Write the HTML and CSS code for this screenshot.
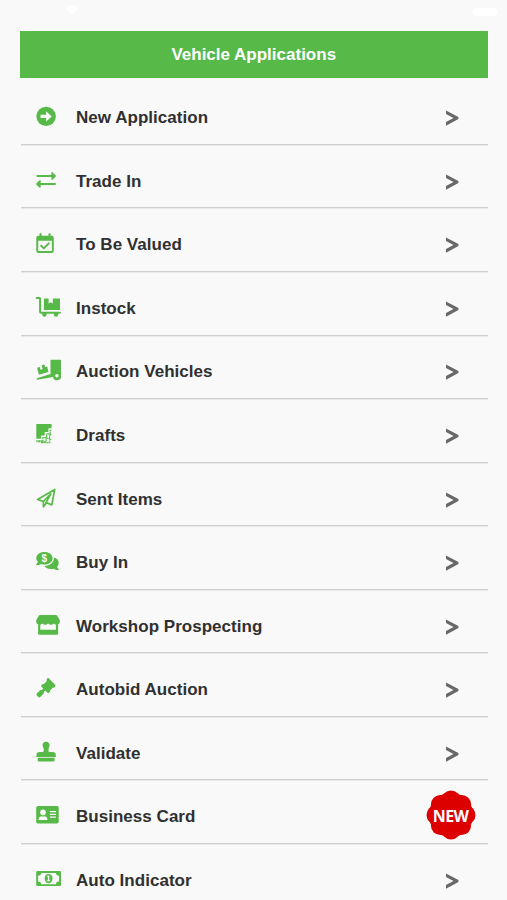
FILE: index.html
```
<!DOCTYPE html>
<html lang="en">
<head>
<meta charset="utf-8">
<meta name="viewport" content="width=device-width">
<title>Vehicle Applications</title>
<link rel="stylesheet" href="styles.css">
</head>
<body>
<svg class="symbols" aria-hidden="true">
  <symbol id="chevron" viewBox="0 0 16 20"><path d="M2 2.500 14.400 8.900v2.200L2 17.700v-3.600L9.500 10 2 6z"/></symbol>
</svg>
<header class="status" aria-hidden="true">
  <svg class="wifi" viewBox="0 0 14 10"><path d="M0 3Q7-3 14 3L7 10z"/></svg>
  <svg class="battery" viewBox="0 0 24 10"><rect y="1" width="24" height="8" rx="4"/></svg>
</header>
<main class="menu">
  <h1 class="title">Vehicle Applications</h1>
  <ul class="list">
    <li class="row">
      <svg class="icon" viewBox="0 0 28 24"><circle cx="12.1" cy="10.4" r="9.7"/><path class="paper" d="M6.600 8.700h5.500V5.300l5.700 5.100-5.700 5.100v-3.400H6.600z"/></svg>
      <span class="label">New Application</span><svg class="chevron"><use href="#chevron"/></svg>
    </li>
    <li class="row">
      <svg class="icon" viewBox="0 0 28 24"><path class="line" d="M3.400 5.900h16M21 14H5"/><path d="M17.400 2.400q.5-.8 1.400 0l3 3q.5.500 0 1l-3 3q-.9.800-1.400 0zM6.700 10.400q-.5-.8-1.400 0l-3 3q-.5.500 0 1l3 3q.9.800 1.400 0z"/></svg>
      <span class="label">Trade In</span><svg class="chevron"><use href="#chevron"/></svg>
    </li>
    <li class="row">
      <svg class="icon" viewBox="0 0 28 24"><path fill-rule="evenodd" d="M4.300 2.800h1.200V.7q0-.5.5-.5h1.100q.5 0 .5.500v2.100h6.900V.7q0-.5.5-.5h1.100q.5 0 .5.500v2.100h1.200q2 0 2 2v13.200q0 2-2 2H4.300q-2 0-2-2V4.800q0-2 2-2zm-.1 4.900v9.900q0 .5.500.500h12.700q.5 0 .5-.5V7.700z"/><path class="line" d="m7.200 12.800 2.600 2.600 5-5"/></svg>
      <span class="label">To Be Valued</span><svg class="chevron"><use href="#chevron"/></svg>
    </li>
    <li class="row">
      <svg class="icon" viewBox="0 0 28 24"><path class="line" d="M2.700 1.100h2.900q.5 0 .5.500v13.500q0 .6.600.6h19.100"/><path d="M10 1.400h4.600v5.100l2.100-1.200 2.100 1.200V1.400H26V13H9.800z"/><circle cx="10.400" cy="17.600" r="2.200"/><circle cx="22" cy="17.600" r="2.200"/></svg>
      <span class="label">Instock</span><svg class="chevron"><use href="#chevron"/></svg>
    </li>
    <li class="row">
      <svg class="icon" viewBox="0 0 28 24"><path fill-rule="evenodd" d="M16.500.4q0-.6.600-.6h9.200q.7 0 .7.700v15a4 4 0 0 1-7.900 1.400L3.500 19.800q-.7 0-.8-.8-.1-.7.800-1l13-3.900zm6.400 13.500a1.700 1.700 0 1 0 0 3.500 1.700 1.700 0 0 0 0-3.500z"/><path d="m3 7.700 2.700-.8 1 3 1.900-1.100-1-3.500 2.700-.9.900 2.700 2-.4 1.300 5.200-9.600 2.800z"/></svg>
      <span class="label">Auction Vehicles</span><svg class="chevron"><use href="#chevron"/></svg>
    </li>
    <li class="row">
      <svg class="icon" viewBox="0 0 28 24"><path d="M2.300 0h15.300v4.200h-3.200v3.700h-3.700v3.700H7.100v3.200H2.300z"/><path class="steps" d="M17.300 6.200h-1.100v3.700h-3.700v3.700H8.900v3.100H2.400M17.300 10.900h-1.700v3.400h-3.400v3.500H2.400M17.300 15.300h-1.500v3.500H7"/></svg>
      <span class="label">Drafts</span><svg class="chevron"><use href="#chevron"/></svg>
    </li>
    <li class="row">
      <svg class="icon" viewBox="0 0 28 24"><path class="line plane" d="M3.600 11.500 20.700 1.400 17.800 16.900 12.600 14.800 9.400 18.800V13.500z"/><path class="line plane" d="M9.400 13.500 16.800 5.800 12 14.600"/></svg>
      <span class="label">Sent Items</span><svg class="chevron"><use href="#chevron"/></svg>
    </li>
    <li class="row">
      <svg class="icon" viewBox="0 0 28 24"><path d="M20 6.600c3 .8 4.700 3 4.700 5.300 0 1.500-.6 2.700-1.600 3.800.3 1 .9 1.800 1.600 2.500.3.400 0 .9-.4.900-1.900 0-3.500-.6-4.700-1.400-4.200 1-7.600-.4-9.100-2.700 5.500-.2 9.500-3.400 9.500-8.400z"/><path d="M10.400 1c4.700 0 8.200 2.700 8.200 6.200s-3.500 6.300-8.200 6.300c-1.300 0-2.400-.2-3.400-.6-1.200.8-2.800 1.300-4.400 1.300-.4 0-.7-.5-.4-.8.8-.8 1.400-1.700 1.700-2.600-1-1.100-1.600-2.200-1.600-3.600C2.300 3.700 5.800 1 10.400 1z"/><text class="coin" x="10.400" y="10.700">$</text></svg>
      <span class="label">Buy In</span><svg class="chevron"><use href="#chevron"/></svg>
    </li>
    <li class="row">
      <svg class="icon" viewBox="0 0 28 24"><path d="M6 0h16q.7 0 1 .5l2.500 4q1 2.500-.2 4-1 1.300-2.800 1.300-1.500 0-2.700-1.200-1.100 1.200-2.800 1.200-1.700 0-2.900-1.200-1.200 1.200-2.900 1.200T8.400 8.600Q7.200 9.800 5.700 9.800q-1.900 0-2.900-1.300-1.200-1.500-.3-4L5 .5Q5.300 0 6 0z"/><path d="M4.100 9.300h2.200v5.400h15.600V9.300h2.200v9.200q0 1.200-1.200 1.200H5.300q-1.200 0-1.200-1.200z"/></svg>
      <span class="label">Workshop Prospecting</span><svg class="chevron"><use href="#chevron"/></svg>
    </li>
    <li class="row">
      <svg class="icon" viewBox="0 0 28 24"><path d="m13 .2 1.500-.2 6.900 6.900-.1 1.500-1.100 1.100q-.6.500-1.200 0l-3 3q.5.600 0 1.200l-1.100 1.100q-.7.600-1.400 0l-2.300-2.300-1.500 1.500q.5.900-.2 1.700l-3.200 3.300q-1 .8-1.900 0l-1.600-1.600q-.8-.9 0-1.900l3.300-3.200q.8-.7 1.700-.2l1.500-1.500-1.900-1.900q-.6-.7 0-1.400l1.100-1.100q.6-.5 1.200 0l3-3q-.5-.6 0-1.200z"/></svg>
      <span class="label">Autobid Auction</span><svg class="chevron"><use href="#chevron"/></svg>
    </li>
    <li class="row">
      <svg class="icon" viewBox="0 0 28 24"><path d="M12.100-.2c2.300 0 4 2.100 3.400 4.300-.5 1.500-1.100 2.900-1.100 4.500 0 1 .7 1.500 1.500 1.500h2.400q3.500 0 3.500 3.300v1.500H2.400v-1.500q0-3.300 3.500-3.300h2.400c.9 0 1.500-.6 1.500-1.500 0-1.600-.6-3-1.100-4.500-.6-2.200 1.100-4.300 3.400-4.300z"/><path d="M3.700 15.800h16.800v2.800q0 1-1 1H4.700q-1 0-1-1z"/></svg>
      <span class="label">Validate</span><svg class="chevron"><use href="#chevron"/></svg>
    </li>
    <li class="row">
      <svg class="icon" viewBox="0 0 28 24"><rect x="2.200" y="1" width="22.500" height="17.500" rx="1.800"/><circle class="paper" cx="9" cy="7.400" r="2.800"/><path class="paper" d="M4.600 14.500c0-2.300 1.600-3.300 3-3.300q1.400.6 2.800 0c1.500 0 3 1 3 3.300q0 .5-.5.500H5.100q-.5 0-.5-.5zM15.900 6h6v1.300h-6zM15.900 8.800h6v1.300h-6zM15.900 11.500h6v1.300h-6z"/></svg>
      <span class="label">Business Card</span>
      <svg class="badge" viewBox="0 0 50 50"><circle cx="25" cy="25" r="22.200"/><circle cx="25" cy="10" r="9.500"/><circle cx="35.600" cy="14.400" r="9.500"/><circle cx="40" cy="25" r="9.500"/><circle cx="35.600" cy="35.600" r="9.500"/><circle cx="25" cy="40" r="9.500"/><circle cx="14.400" cy="35.600" r="9.500"/><circle cx="10" cy="25" r="9.500"/><circle cx="14.400" cy="14.400" r="9.500"/><text x="24.600" y="31.600">NEW</text></svg>
    </li>
    <li class="row">
      <svg class="icon" viewBox="0 0 28 24"><rect x="2.200" y="2.100" width="24.800" height="15" rx="1.300"/><path class="paper" d="M7.200 4h14.800q0 2.700 3.100 2.800v5.600q-3.100.1-3.100 2.800H7.200q0-2.700-3.100-2.800V6.800Q7.200 6.700 7.200 4z"/><ellipse cx="14.600" cy="9.600" rx="3.900" ry="4.700"/><path class="paper" d="M13.200 7.100 14.200 6.500h1.100v4.700h.9v1.100h-3.300v-1.100h1V7.900h-.7z"/></svg>
      <span class="label">Auto Indicator</span><svg class="chevron"><use href="#chevron"/></svg>
    </li>
  </ul>
</main>
</body>
</html>
```
FILE: styles.css
```
* { box-sizing: border-box; }
html, body { height: 100%; }
body {
  margin: 0;
  overflow: hidden;
  background: #f9f9f9;
  color: #303030;
  font-family: "Liberation Sans", Arial, sans-serif;
}
.symbols { display: none; }
.status {
  display: flex;
  justify-content: space-between;
  height: 30px;
  padding: 5px 10px 0 65px;
  fill: #fff;
}
.wifi { width: 14px; height: 10px; }
.battery { width: 24px; height: 10px; margin-top: 2px; }
.menu { padding: .5px 19.500px 0 20.500px; }
.title {
  display: flex;
  align-items: center;
  justify-content: center;
  height: 47px;
  margin: 0 0 0 -.5px;
  padding-top: 1px;
  background: #56b948;
  color: #fff;
  font-size: 17px;
  font-weight: 700;
}
.list { list-style: none; margin: 0; padding: 3.900px 0 0; }
.row {
  display: flex;
  align-items: center;
  height: 63.560px;
  padding: 11.200px 11.500px 0 13.500px;
  border-bottom: 1px solid #cecece;
  box-shadow: 0 1px 0 #e9e9e9;
}
.icon {
  flex: none;
  width: 28px;
  height: 24px;
  margin-right: 14px;
  overflow: visible;
  fill: #56b948;
}
.label {
  flex: 1;
  font-size: 17px;
  font-weight: 700;
  line-height: 24px;
  letter-spacing: .03px;
  white-space: nowrap;
}
.paper { fill: #f9f9f9; }
.line { fill: none; stroke: #56b948; stroke-width: 2; stroke-linecap: round; stroke-linejoin: round; }
.plane { stroke-width: 1.700; }
.steps { fill: none; stroke: #56b948; stroke-width: 1.100; stroke-dasharray: 2.500 .5; }
.coin { fill: #f9f9f9; font-size: 10px; font-weight: 700; text-anchor: middle; }
.chevron { flex: none; width: 16px; height: 20px; margin-right: 16px; fill: #686868; }
.badge { flex: none; width: 50px; height: 50px; margin: -5px 0 0; fill: #dc0000; }
.badge text {
  fill: #fff;
  font-family: "Open Sans", sans-serif;
  font-size: 16px;
  font-weight: 700;
  letter-spacing: -.6px;
  text-anchor: middle;
}
```
